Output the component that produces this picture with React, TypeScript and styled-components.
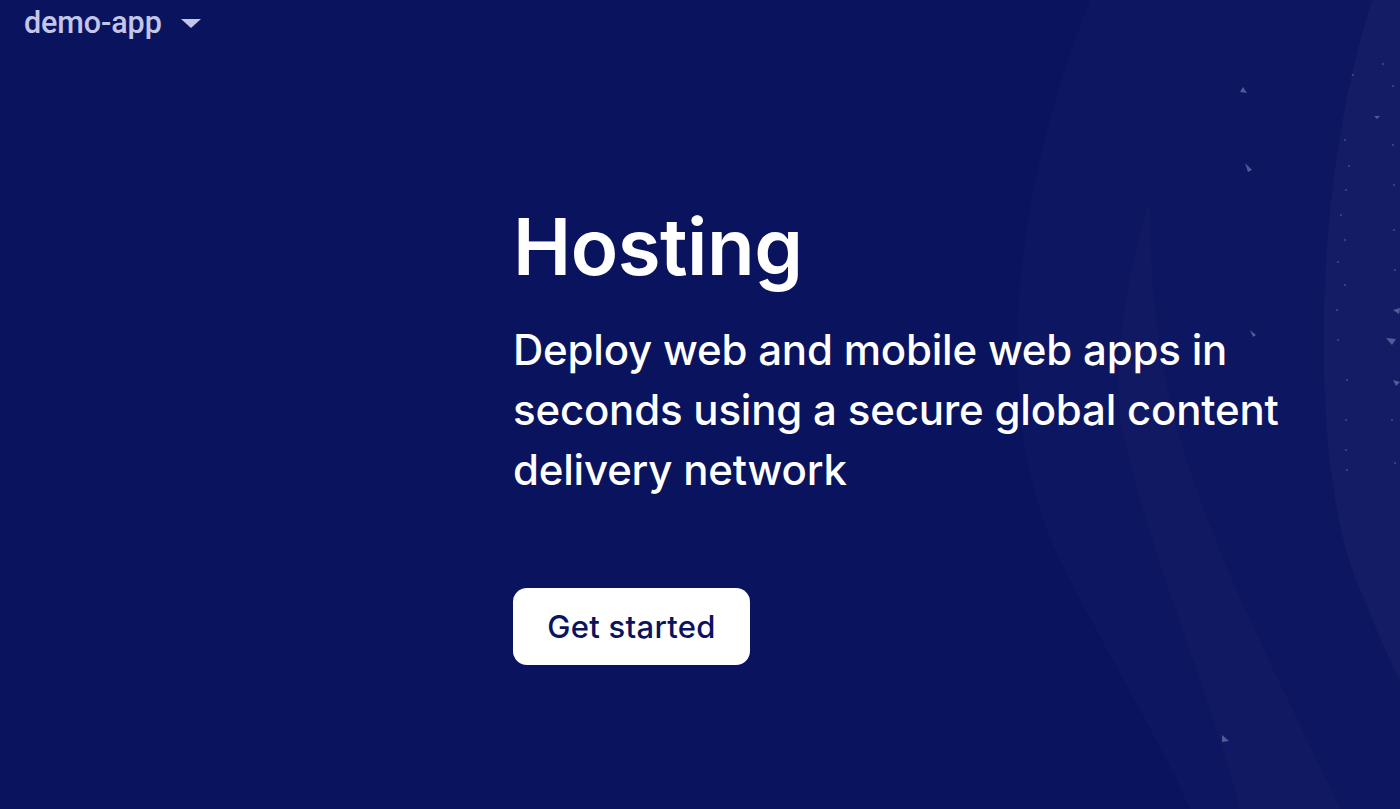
import React from "react";
import styled, { createGlobalStyle } from "styled-components";

const GlobalStyle = createGlobalStyle`
  html, body { margin: 0; padding: 0; }
  body { background: #0a135e; font-family: "Inter", "Open Sans", sans-serif; overflow: hidden; }
`;

const Page = styled.div`
  position: relative;
  width: 100%;
  height: 809px;
  background: #0a135e;
  overflow: hidden;
  display: flex;
  flex-direction: column;
`;

const Backdrop = styled.svg`
  position: absolute;
  inset: 0;
  width: 100%;
  height: 100%;
  pointer-events: none;
`;

const Header = styled.header`
  position: relative;
  display: flex;
  align-items: center;
  gap: 19px;
  padding: 2px 24px 0;
  height: 40px;
`;

const ProjectName = styled.span`
  font-family: "Roboto", "Liberation Sans", sans-serif;
  font-weight: 500;
  font-size: 30.5px;
  color: #c3c6e6;
  letter-spacing: -0.1px;
`;

const Caret = styled.span`
  width: 0;
  height: 0;
  border-left: 10px solid transparent;
  border-right: 10px solid transparent;
  border-top: 9px solid #c3c6e6;
  margin-top: 2px;
`;

const Hero = styled.main`
  position: relative;
  display: flex;
  flex-direction: column;
  align-items: flex-start;
  padding: 160px 0 0 513px;
`;

const Title = styled.h1`
  margin: 0;
  font-family: "Inter", sans-serif;
  font-weight: 600;
  font-size: 78px;
  line-height: 90px;
  color: #ffffff;
  letter-spacing: -0.5px;
`;

const Subtitle = styled.p`
  margin: 28px 0 0;
  max-width: 800px;
  font-family: "Inter", sans-serif;
  font-weight: 500;
  font-size: 42px;
  line-height: 60px;
  color: #ffffff;
  letter-spacing: -0.2px;
`;

const StartButton = styled.button`
  margin-top: 88px;
  width: 237px;
  height: 77px;
  padding: 0;
  border: none;
  border-radius: 14px;
  background: #ffffff;
  color: #0a135e;
  font-family: "Inter", sans-serif;
  font-weight: 500;
  font-size: 31px;
  letter-spacing: 0.3px;
  cursor: pointer;
`;

export default function App() {
  return (
    <>
      <GlobalStyle />
      <Page>
        <Backdrop viewBox="0 0 1400 809" preserveAspectRatio="none">
          <path
            d="M1090 0 C1010 200 990 420 1060 560 C1110 660 1160 740 1190 809 L1400 809 L1400 0 Z"
            fill="#ffffff"
            opacity="0.016"
          />
          <path
            d="M1120 420 C1150 560 1210 690 1240 809 L1340 809 C1290 700 1230 590 1190 470 C1160 380 1150 300 1150 200 C1125 280 1115 350 1120 420 Z"
            fill="#ffffff"
            opacity="0.014"
          />
          <path
            d="M1372 0 C1340 100 1325 220 1324 320 C1322 440 1335 540 1365 600 C1380 640 1392 665 1400 680 L1400 0 Z"
            fill="#ffffff"
            opacity="0.028"
          />
          <g fill="#8a90c4" opacity="0.55">
            <polygon points="1243,87 1247,93 1240,92" />
            <polygon points="1245,163 1252,170 1248,172" />
            <polygon points="1374,116 1380,116 1377,119" />
            <polygon points="1393,310 1400,308 1399,314" />
            <polygon points="1386,338 1396,339 1392,345" />
            <polygon points="1250,330 1256,335 1253,337" />
            <polygon points="1393,380 1400,382 1396,386" />
            <polygon points="1222,735 1229,741 1222,742" />
            <polygon points="1123,358 1127,360 1123,362" />
          </g>
          <g fill="#6e74b8" opacity="0.6">
            {[
              [1353, 75], [1383, 64], [1393, 86], [1345, 140], [1349, 166], [1346, 190],
              [1341, 215], [1345, 240], [1338, 262], [1345, 285], [1337, 310],
              [1338, 340], [1347, 380], [1346, 420], [1346, 450], [1347, 470],
              [1393, 145], [1394, 185], [1394, 230], [1395, 270], [1392, 420], [1395, 463],
            ].map(([x, y], i) => (
              <circle key={i} cx={x} cy={y} r={0.9} />
            ))}
          </g>
        </Backdrop>
        <Header>
          <ProjectName>demo-app</ProjectName>
          <Caret />
        </Header>
        <Hero>
          <Title>Hosting</Title>
          <Subtitle>
            Deploy web and mobile web apps in seconds using a secure global content
            delivery network
          </Subtitle>
          <StartButton>Get started</StartButton>
        </Hero>
      </Page>
    </>
  );
}
